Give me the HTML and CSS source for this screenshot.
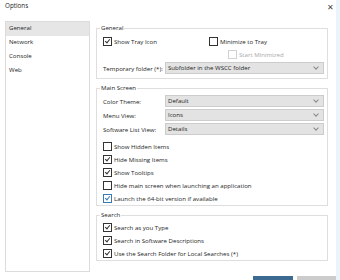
FILE: index.html
```html
<!DOCTYPE html>
<html>
<head>
    <title>Options</title>
    <link rel="stylesheet" href="styles.css">
</head>
<body>
    <div id="window">
        <div id="titlebar">
            <span class="title">Options</span>
            <span class="close">&#x2715;</span>
        </div>
        <div id="main">
            <ul id="nav">
                <li class="active">General</li>
                <li>Network</li>
                <li>Console</li>
                <li>Web</li>
            </ul>
            <div id="content">
                <fieldset class="group">
                    <legend>General</legend>
                    <div class="row">
                        <label class="check on first"><span class="box"></span>Show Tray Icon</label>
                        <label class="check"><span class="box"></span>Minimize to Tray</label>
                    </div>
                    <div class="row">
                        <label class="check disabled minimized"><span class="box"></span>Start Minimized</label>
                    </div>
                    <div class="row field">
                        <span class="label">Temporary folder (*):</span>
                        <span class="select">Subfolder in the WSCC folder</span>
                    </div>
                </fieldset>
                <fieldset class="group">
                    <legend>Main Screen</legend>
                    <div class="row field">
                        <span class="label">Color Theme:</span>
                        <span class="select">Default</span>
                    </div>
                    <div class="row field">
                        <span class="label">Menu View:</span>
                        <span class="select">Icons</span>
                    </div>
                    <div class="row field">
                        <span class="label">Software List View:</span>
                        <span class="select">Details</span>
                    </div>
                    <div class="checks spaced">
                        <label class="check"><span class="box"></span>Show Hidden Items</label>
                        <label class="check on"><span class="box"></span>Hide Missing Items</label>
                        <label class="check on"><span class="box"></span>Show Tooltips</label>
                        <label class="check"><span class="box"></span>Hide main screen when launching an application</label>
                        <label class="check on focus"><span class="box"></span>Launch the 64-bit version if available</label>
                    </div>
                </fieldset>
                <fieldset class="group">
                    <legend>Search</legend>
                    <div class="checks">
                        <label class="check on"><span class="box"></span>Search as you Type</label>
                        <label class="check on"><span class="box"></span>Search in Software Descriptions</label>
                        <label class="check on"><span class="box"></span>Use the Search Folder for Local Searches (*)</label>
                    </div>
                </fieldset>
            </div>
        </div>
        <!-- OK / Cancel, only their top edge is in view -->
        <div id="buttons">
            <button class="primary" aria-label="OK"></button>
            <button aria-label="Cancel"></button>
        </div>
    </div>
</body>
</html>
```

FILE: styles.css
```css
html, body {
    margin: 0;
    padding: 0;
    background-color: #e9f4fb;
}
body {
    font-family: "Open Sans", "Noto Sans", sans-serif;
    font-size: 6.1px;
    color: #1e1e1e;
    width: 340px;
    height: 280px;
    overflow: hidden;
}
#window {
    width: 336px;
    height: 280px;
    background-color: #fff;
    display: flex;
    flex-direction: column;
    overflow: hidden;
}
#window > div {
    flex: none;
}
#titlebar {
    height: 21px;
    display: flex;
    justify-content: space-between;
    padding: 1px 2px 0 5px;
    box-sizing: border-box;
}
.title {
    font-size: 6.3px;
    line-height: 10px;
}
.close {
    font-size: 7.5px;
    line-height: 12px;
    color: #444;
}
#main {
    display: flex;
    padding-left: 5px;
    height: 251px;
}
#nav {
    list-style: none;
    margin: 0;
    padding: 0;
    width: 85px;
    height: 251px;
    border: 1px solid #dcdcdc;
    box-sizing: border-box;
}
#nav li {
    height: 14px;
    line-height: 12px;
    padding-left: 3px;
}
#nav li.active {
    background-color: #e6e6e6;
}
#content {
    margin-left: 6px;
    width: 232px;
}
.group {
    border: 1px solid #dedede;
    margin: 0 0 4px 0;
    padding: 1px 3px 0 6px;
}
.group:first-child {
    margin-top: 2px;
    padding-top: 2px;
    padding-bottom: 3px;
}
.group legend {
    padding: 0 1px;
    margin-left: -3px;
    line-height: 10px;
}
.row {
    display: flex;
    align-items: center;
    height: 13px;
}
.row.field {
    height: 14px;
}
.label {
    width: 62px;
    white-space: nowrap;
}
.select {
    flex: 1;
    height: 10px;
    line-height: 10px;
    background-color: #e3e3e3;
    border: 1px solid #cccccc;
    padding-left: 2px;
    position: relative;
}
.select::after {
    content: "";
    position: absolute;
    right: 5px;
    top: 2px;
    width: 3px;
    height: 3px;
    border-right: 1px solid #888;
    border-bottom: 1px solid #888;
    transform: rotate(45deg);
}
.checks.spaced {
    margin-top: 4px;
}
.checks .check {
    height: 13px;
}
.check {
    display: flex;
    align-items: center;
    white-space: nowrap;
}
.check.first {
    width: 106px;
}
.box {
    width: 7px;
    height: 7px;
    border: 1px solid #333;
    margin-right: 2px;
    position: relative;
    flex: none;
}
.check.on .box::after {
    content: "";
    position: absolute;
    left: 2px;
    top: 0;
    width: 2px;
    height: 4px;
    border-right: 1px solid #333;
    border-bottom: 1px solid #333;
    transform: rotate(40deg);
}
.check.focus .box,
.check.focus .box::after {
    border-color: #3b79b5;
}
.check.minimized {
    margin-left: 125px;
}
.check.disabled {
    color: #a8a8a8;
}
.check.disabled .box {
    border-color: #d2d2d2;
}
#buttons {
    display: flex;
    justify-content: flex-end;
    gap: 4px;
    padding-top: 4px;
    margin-right: -1px;
}
#buttons button {
    width: 40px;
    height: 4px;
    padding: 0;
    border: none;
    background-color: #cccccc;
}
#buttons button.primary {
    background-color: #3c6a90;
}
```
